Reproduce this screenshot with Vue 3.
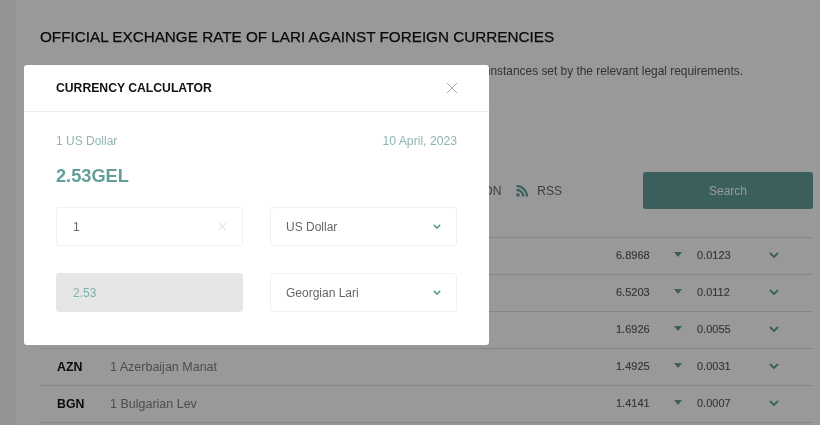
<script setup>
const rows = [
  { id: 1, code: '', name: '', rate: '6.8968', diff: '0.0123' },
  { id: 2, code: '', name: '', rate: '6.5203', diff: '0.0112' },
  { id: 3, code: '', name: '', rate: '1.6926', diff: '0.0055' },
  { id: 4, code: 'AZN', name: '1 Azerbaijan Manat', rate: '1.4925', diff: '0.0031' },
  { id: 5, code: 'BGN', name: '1 Bulgarian Lev', rate: '1.4141', diff: '0.0007' },
]
</script>

<template>
  <div class="page">
    <aside class="rail"></aside>
    <main class="content">
      <h1 class="title">OFFICIAL EXCHANGE RATE OF LARI AGAINST FOREIGN CURRENCIES</h1>
      <p class="lead">instances set by the relevant legal requirements.</p>
      <div class="tools">
        <span class="export">JSON</span>
        <svg class="rss" viewBox="0 0 12 12" width="12" height="12">
          <circle cx="2" cy="10" r="1.8" fill="#5f9e9a" />
          <path d="M.5 4.8a6.7 6.7 0 0 1 6.7 6.7M.5 1a10.5 10.5 0 0 1 10.5 10.5" fill="none" stroke="#5f9e9a" stroke-width="2.2" />
        </svg>
        <span class="export rss-label">RSS</span>
        <button class="search">Search</button>
      </div>
      <div class="table">
        <div v-for="r in rows" :key="r.id" class="row">
          <b class="code">{{ r.code }}</b>
          <span class="name">{{ r.name }}</span>
          <span class="rate up">{{ r.rate }}</span>
          <span class="tri up"></span>
          <span class="diff up">{{ r.diff }}</span>
          <svg class="chev up" viewBox="0 0 10 6" width="10" height="6">
            <path d="M1 1l4 4 4-4" fill="none" stroke="#5f9e9a" stroke-width="1.8" />
          </svg>
        </div>
      </div>
    </main>

    <div class="overlay"></div>

    <section class="modal">
      <header class="modal-head">
        <h2>CURRENCY CALCULATOR</h2>
        <svg viewBox="0 0 12 12" width="12" height="12">
          <path d="M1 1l10 10M11 1L1 11" stroke="#a9a9a9" stroke-width="1" fill="none" />
        </svg>
      </header>
      <div class="modal-body">
        <div class="meta"><span>1 US Dollar</span><span class="date">10 April, 2023</span></div>
        <div class="big">2.53GEL</div>
        <div class="fields">
          <div class="field">
            <span class="val">1</span>
            <svg viewBox="0 0 10 10" width="9" height="9">
              <path d="M1 1l8 8M9 1L1 9" stroke="#d8d8d8" stroke-width="1.1" fill="none" />
            </svg>
          </div>
          <div class="field">
            <span>US Dollar</span>
            <svg viewBox="0 0 10 6" width="8" height="5">
              <path d="M1 1l4 4 4-4" fill="none" stroke="#5f9e9a" stroke-width="2" />
            </svg>
          </div>
          <div class="field result"><span class="val">2.53</span></div>
          <div class="field">
            <span>Georgian Lari</span>
            <svg viewBox="0 0 10 6" width="8" height="5">
              <path d="M1 1l4 4 4-4" fill="none" stroke="#5f9e9a" stroke-width="2" />
            </svg>
          </div>
        </div>
      </div>
    </section>
  </div>
</template>

<style>
html, body { margin: 0; }
</style>

<style scoped>
.page {
  position: relative;
  width: 820px;
  height: 425px;
  overflow: hidden;
  display: flex;
  background: #fff;
  font-family: "Liberation Sans", Arial, sans-serif;
  color: #666;
  filter: blur(0.35px);
}
.rail {
  width: 16px;
  flex: none;
  background: #f6f6f6;
}
.content {
  flex: none;
  width: 773px;
  margin-left: 24px;
}
.title {
  margin: 28px 0 0;
  font-size: 15.26px;
  line-height: 18px;
  font-weight: 400;
  color: #111;
  white-space: nowrap;
  -webkit-text-stroke: 0.25px #111;
}
.lead {
  width: 703px;
  margin: 16px 0 0;
  font-size: 11.9px;
  line-height: 18px;
  color: #555;
  white-space: nowrap;
  text-align: right;
}
.tools {
  display: flex;
  align-items: center;
  margin-top: 92px;
  height: 37px;
  justify-content: flex-end;
}
.export { font-size: 12px; color: #666; }
.rss { margin-left: 15px; }
.rss-label { margin-left: 9px; margin-right: 81px; }
.search {
  width: 170px;
  height: 37px;
  border: 0;
  border-radius: 3px;
  background: #629e9a;
  color: #fff;
  font: 12px "Liberation Sans", Arial, sans-serif;
}
.table {
  margin-top: 28px;
  border-top: 1px solid #e0e0e0;
}
.row {
  display: flex;
  align-items: center;
  height: 36px;
  border-bottom: 1px solid #e0e0e0;
  font-size: 12px;
}
.up { margin-bottom: 3px; }
.code {
  flex: none;
  width: 53px;
  margin-left: 17px;
  font-size: 12.3px;
  color: #111;
}
.name { flex: none; width: 506px; color: #808080; font-size: 12.5px; }
.rate { width: 58px; color: #5c5c5c; font-size: 11px; -webkit-text-stroke: 0.15px #5c5c5c; }
.tri {
  width: 0;
  height: 0;
  border-left: 4px solid transparent;
  border-right: 4px solid transparent;
  border-top: 5px solid #629e9a;
  margin-right: 15px;
}
.diff { width: 72px; color: #5c5c5c; font-size: 11px; -webkit-text-stroke: 0.15px #5c5c5c; }
.overlay {
  position: absolute;
  inset: 0;
  background: rgba(0, 0, 0, 0.4);
}
.modal {
  position: absolute;
  left: 24px;
  top: 65px;
  width: 465px;
  height: 280px;
  background: #fff;
  border-radius: 3px;
}
.modal-head {
  display: flex;
  align-items: center;
  justify-content: space-between;
  height: 46px;
  padding: 0 31px 0 32px;
  border-bottom: 1px solid #eee;
}
.modal-head h2 {
  margin: 0;
  font-size: 12.2px;
  font-weight: 700;
  color: #111;
}
.modal-body { padding: 21px 32px 0; }
.meta {
  display: flex;
  justify-content: space-between;
  font-size: 12px;
  line-height: 16px;
  color: #8fb5b2;
}
.date { font-size: 12.2px; }
.big {
  margin-top: 16px;
  font-size: 18.2px;
  line-height: 22px;
  font-weight: 700;
  color: #629e9a;
}
.fields {
  display: grid;
  grid-template-columns: 187px 187px;
  column-gap: 27px;
  row-gap: 27px;
  margin-top: 20px;
}
.field {
  display: flex;
  align-items: center;
  justify-content: space-between;
  box-sizing: border-box;
  height: 39px;
  padding: 0 15px;
  border: 1px solid #f0f0f0;
  border-radius: 3px;
  font-size: 12px;
  color: #666;
}
.field .val { margin-left: 1px; }
.result {
  background: #e6e6e6;
  border-color: #e6e6e6;
  color: #7fb0ac;
}
</style>
